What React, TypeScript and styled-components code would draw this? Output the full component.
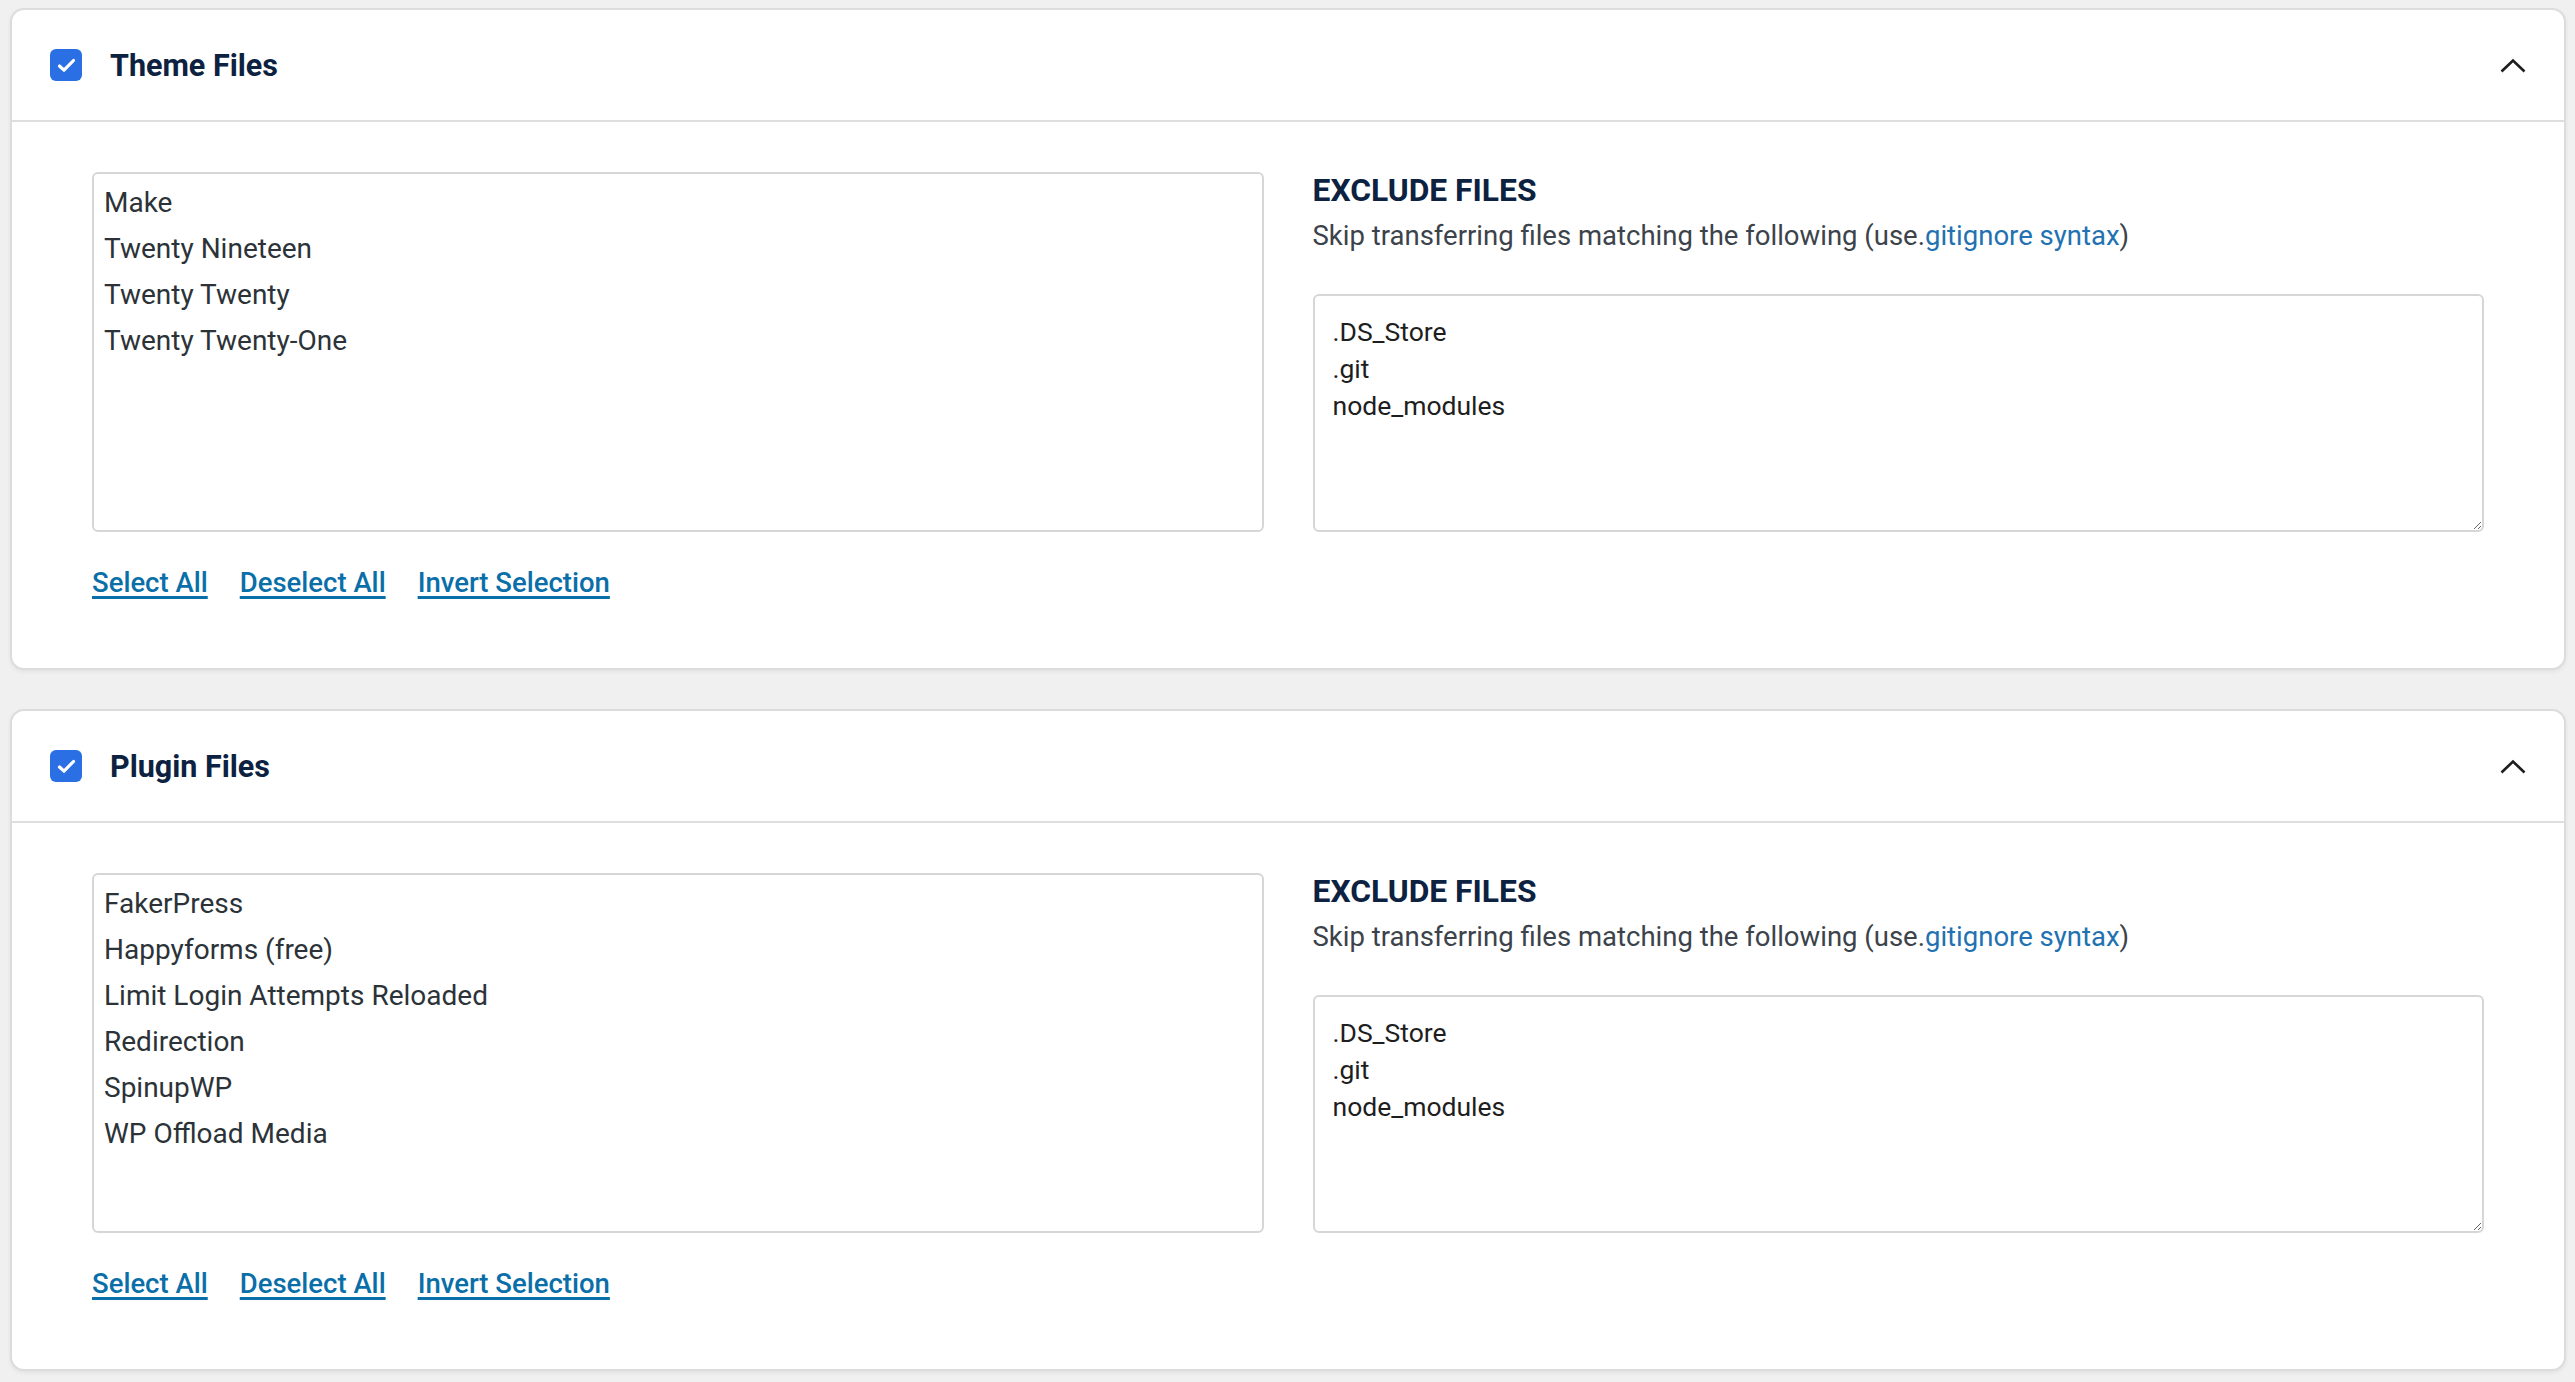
import React from "react";
import styled, { createGlobalStyle } from "styled-components";

const GlobalStyle = createGlobalStyle`
  html, body {
    margin: 0;
    padding: 0;
    background: #f0f0f0;
    font-family: Roboto, "Noto Sans", sans-serif;
  }
`;

type Section = {
  title: string;
  items: string[];
};

const sections: Section[] = [
  {
    title: "Theme Files",
    items: ["Make", "Twenty Nineteen", "Twenty Twenty", "Twenty Twenty-One"],
  },
  {
    title: "Plugin Files",
    items: [
      "FakerPress",
      "Happyforms (free)",
      "Limit Login Attempts Reloaded",
      "Redirection",
      "SpinupWP",
      "WP Offload Media",
    ],
  },
];

const excludeDefault = ".DS_Store\n.git\nnode_modules";

export default function App() {
  return (
    <>
      <GlobalStyle />
      <Page>
        {sections.map((s) => (
          <Card key={s.title}>
            <Header>
              <CheckBox>
                <svg width="19" height="15" viewBox="0 0 19 15">
                  <path
                    d="M2.5 8 L7 12.2 L16.5 2.5"
                    fill="none"
                    stroke="#fff"
                    strokeWidth="3.2"
                    strokeLinecap="round"
                    strokeLinejoin="round"
                  />
                </svg>
              </CheckBox>
              <Title>{s.title}</Title>
              <Chevron>
                <svg width="26" height="15" viewBox="0 0 26 15">
                  <path d="M1.5 13.5 L13 2.5 L24.5 13.5" fill="none" stroke="#1e1e1e" strokeWidth="2.6" />
                </svg>
              </Chevron>
            </Header>
            <Body>
              <div>
                <ListBox>
                  {s.items.map((item) => (
                    <ListItem key={item}>{item}</ListItem>
                  ))}
                </ListBox>
                <Actions>
                  <ActionLink href="#">Select All</ActionLink>
                  <ActionLink href="#">Deselect All</ActionLink>
                  <ActionLink href="#">Invert Selection</ActionLink>
                </Actions>
              </div>
              <ExcludeColumn>
                <Heading>EXCLUDE FILES</Heading>
                <Help>
                  Skip transferring files matching the following (use.
                  <HelpLink href="#">gitignore syntax</HelpLink>)
                </Help>
                <ExcludeArea defaultValue={excludeDefault} spellCheck={false} />
              </ExcludeColumn>
            </Body>
          </Card>
        ))}
      </Page>
    </>
  );
}

const Page = styled.div`
  display: flex;
  flex-direction: column;
  gap: 39px;
  padding: 8px 9px 0 10px;
  min-height: 1382px;
  box-sizing: border-box;
`;

const Card = styled.section`
  background: #fff;
  border: 2px solid #dcdcdc;
  border-radius: 14px;
  box-shadow: 0 2px 4px rgba(0, 0, 0, 0.06);
  padding-bottom: 69px;
`;

const Header = styled.div`
  display: flex;
  align-items: center;
  height: 110px;
  padding: 0 38px 0 38px;
  border-bottom: 2px solid #dedede;
`;

const CheckBox = styled.span`
  width: 32px;
  height: 32px;
  border-radius: 6px;
  background: #2a6fe3;
  display: flex;
  align-items: center;
  justify-content: center;
  flex-shrink: 0;
`;

const Title = styled.h2`
  margin: 0 0 0 28px;
  font-size: 30.5px;
  font-weight: 700;
  color: #0c2240;
  flex: 1;
`;

const Chevron = styled.span`
  display: flex;
  align-items: center;
`;

const Body = styled.div`
  display: grid;
  grid-template-columns: 1fr 1fr;
  column-gap: 49px;
  padding: 50px 80px 0 80px;
`;

const ListBox = styled.div`
  height: 360px;
  box-sizing: border-box;
  border: 2px solid #d6d6d6;
  border-radius: 6px;
  padding: 6px 10px;
  overflow: hidden;
`;

const ListItem = styled.div`
  font-size: 28px;
  line-height: 46px;
  color: #2c3338;
`;

const Actions = styled.div`
  display: flex;
  gap: 32px;
  margin-top: 35px;
`;

const ActionLink = styled.a`
  font-size: 27.5px;
  font-weight: 500;
  line-height: 32px;
  color: #0a6fa8;
  text-decoration: underline;
  text-decoration-thickness: 3px;
  text-underline-offset: 4px;
`;

const ExcludeColumn = styled.div`
  display: flex;
  flex-direction: column;
`;

const Heading = styled.h3`
  margin: 0;
  font-size: 31.8px;
  line-height: 37px;
  font-weight: 700;
  color: #0c2240;
`;

const Help = styled.p`
  margin: 9px 0 0;
  font-size: 27.5px;
  line-height: 36px;
  color: #3c434a;
`;

const HelpLink = styled.a`
  color: #2271b1;
  text-decoration: none;
`;

const ExcludeArea = styled.textarea`
  margin-top: 40px;
  height: 238px;
  box-sizing: border-box;
  border: 2px solid #d6d6d6;
  border-radius: 6px;
  padding: 17px 18px;
  font-family: Roboto, "Noto Sans", sans-serif;
  font-size: 26.5px;
  line-height: 37px;
  color: #1e1e1e;
  resize: vertical;
  outline: none;
`;
